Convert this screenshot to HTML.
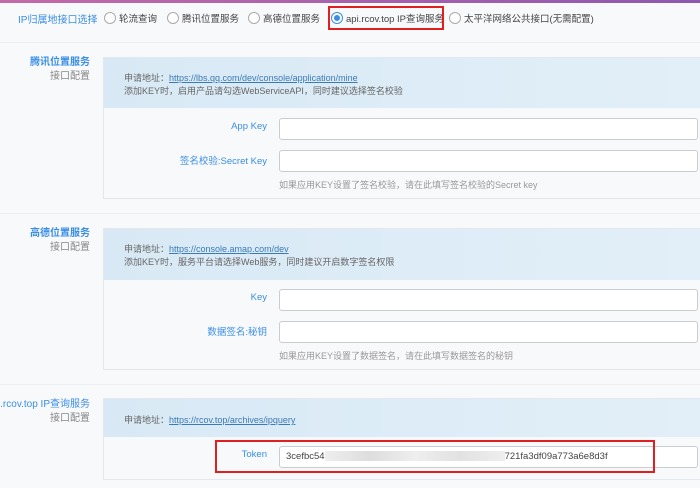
<!DOCTYPE html>
<html><head><meta charset="utf-8"><style>
*{box-sizing:border-box;margin:0;padding:0}
body{width:700px;height:488px;overflow:hidden;background:#f8f9fb;font-family:"Liberation Sans","Noto Sans CJK SC",sans-serif;font-size:10px;color:#555;position:relative}
.top{position:absolute;left:0;top:0;width:700px;height:3px;background:linear-gradient(90deg,#c46aa8,#8e58b0)}
.abs{position:absolute}
.lbl{position:absolute;right:610px;text-align:right;line-height:14px;white-space:nowrap}
.lbl b{color:#3a8ee6;font-weight:bold;display:block}
.lbl span{color:#888}
.sep{position:absolute;left:0;width:700px;height:1px;background:#eceef1}
.panel{position:absolute;left:103px;width:600px;border:1px solid #e4e7eb;background:#f8f9fb}
.hd{background:linear-gradient(90deg,#d8e9f5,#e2eff8);padding:14px 20px 0 20px;line-height:13px;color:#666;font-size:9px}
.hd a{color:#3a7ab8;text-decoration:underline}
.f{position:absolute;left:175px;width:419px;height:22px;border:1px solid #c9ccd1;border-radius:3px;background:#fff}
.fl{position:absolute;right:435px;color:#3a8ee6;font-size:9.5px;white-space:nowrap}
.help{position:absolute;left:175px;color:#999;font-size:9px;white-space:nowrap}
.rad{position:absolute;top:11px;display:flex;align-items:center;font-size:9.5px;color:#444;white-space:nowrap}
.rad i{width:12px;height:12px;border:1px solid #aaa;border-radius:50%;margin-right:3px;background:#fff;position:relative}
.rad i.on{border-color:#3a8ee6}
.rad i.on:after{content:"";position:absolute;left:2px;top:2px;width:6px;height:6px;border-radius:50%;background:#3a8ee6}
</style></head><body>
<div class="top"></div>
<div class="abs" style="left:18px;top:11px;color:#3a8ee6;font-size:10px">IP归属地接口选择</div>
<span class="rad" style="left:104px"><i></i>轮流查询</span>
<span class="rad" style="left:167px"><i></i>腾讯位置服务</span>
<span class="rad" style="left:248px"><i></i>高德位置服务</span>
<span class="rad" style="left:331px"><i class="on"></i>api.rcov.top IP查询服务</span>
<span class="rad" style="left:449px"><i></i>太平洋网络公共接口(无需配置)</span>
<div class="abs" style="left:328px;top:6px;width:116px;height:24px;border:2px solid #e02020"></div>
<div class="sep" style="top:42px"></div>

<div class="lbl" style="top:56px"><b>腾讯位置服务</b><span>接口配置</span></div>
<div class="panel" style="top:57px;height:142px">
<div class="hd" style="height:50px">申请地址：<a>https://lbs.qq.com/dev/console/application/mine</a><br>添加KEY时，启用产品请勾选WebServiceAPI，同时建议选择签名校验</div>
<div class="fl" style="top:63px">App Key</div><div class="f" style="top:60px"></div>
<div class="fl" style="top:95px">签名校验:Secret Key</div><div class="f" style="top:92px"></div>
<div class="help" style="top:120px">如果应用KEY设置了签名校验，请在此填写签名校验的Secret key</div>
</div>
<div class="sep" style="top:213px"></div>

<div class="lbl" style="top:227px"><b>高德位置服务</b><span>接口配置</span></div>
<div class="panel" style="top:228px;height:142px">
<div class="hd" style="height:51px">申请地址：<a>https://console.amap.com/dev</a><br>添加KEY时，服务平台请选择Web服务，同时建议开启数字签名权限</div>
<div class="fl" style="top:63px">Key</div><div class="f" style="top:60px"></div>
<div class="fl" style="top:95px">数据签名:秘钥</div><div class="f" style="top:92px"></div>
<div class="help" style="top:120px">如果应用KEY设置了数据签名，请在此填写数据签名的秘钥</div>
</div>
<div class="sep" style="top:384px"></div>

<div class="lbl" style="top:398px;right:610px"><b style="font-weight:normal">api.rcov.top IP查询服务</b><span>接口配置</span></div>
<div class="panel" style="top:398px;height:82px">
<div class="hd" style="height:38px;padding-top:15px">申请地址：<a>https://rcov.top/archives/ipquery</a></div>
<div class="fl" style="top:50px">Token</div>
<div class="f" style="top:47px;padding:4px 6px;font-size:9.5px;color:#444">3cefbc54<span style="display:inline-block;width:180px;height:10px;background:linear-gradient(90deg,#eee,#ddd,#eee,#e2e2e2,#eee);vertical-align:middle"></span>721fa3df09a773a6e8d3f</div>
</div>
<div class="abs" style="left:215px;top:440px;width:440px;height:33px;border:2px solid #e02020"></div>
</body></html>
